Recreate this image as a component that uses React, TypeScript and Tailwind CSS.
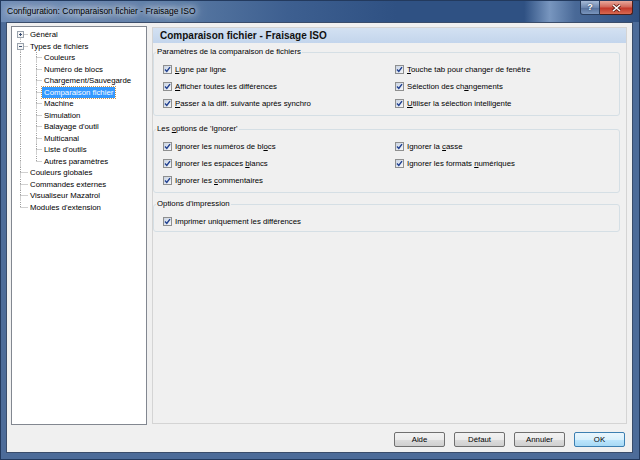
import React from "react";

type TreeItem = {
  label: string;
  level: 0 | 1;
  box?: "+" | "-";
  first?: boolean;
  last?: boolean;
  selected?: boolean;
};

const treeItems: TreeItem[] = [
  { label: "Général", level: 0, box: "+", first: true },
  { label: "Types de fichiers", level: 0, box: "-" },
  { label: "Couleurs", level: 1 },
  { label: "Numéro de blocs", level: 1 },
  { label: "Chargement/Sauvegarde", level: 1 },
  { label: "Comparaison fichier", level: 1, selected: true },
  { label: "Machine", level: 1 },
  { label: "Simulation", level: 1 },
  { label: "Balayage d'outil", level: 1 },
  { label: "Multicanal", level: 1 },
  { label: "Liste d'outils", level: 1 },
  { label: "Autres paramètres", level: 1, last: true },
  { label: "Couleurs globales", level: 0 },
  { label: "Commandes externes", level: 0 },
  { label: "Visualiseur Mazatrol", level: 0 },
  { label: "Modules d'extension", level: 0, last: true },
];

// label parts: [before, underlined letter, after]
type Opt = [string, string, string] | null;

const compareOpts: Opt[] = [
  ["", "L", "igne par ligne"],
  ["", "T", "ouche tab pour changer de fenêtre"],
  ["", "A", "fficher toutes les différences"],
  ["Sélection des ch", "a", "ngements"],
  ["", "P", "asser à la diff. suivante après synchro"],
  ["", "U", "tiliser la sélection intelligente"],
];

const ignoreOpts: Opt[] = [
  ["Ignorer les numéros de bl", "o", "cs"],
  ["Ignorer la ", "c", "asse"],
  ["Ignorer les espaces ", "b", "lancs"],
  ["Ignorer les formats ", "n", "umériques"],
  ["Ignorer les ", "c", "ommentaires"],
  null,
];

const printOpts: Opt[] = [["Imprimer uniquement les différences", "", ""]];

const LINE = "#a0a0a0";
const ROW_H = 11.5;

const Connector = ({
  width,
  top,
  bottom,
  branch,
  box,
}: {
  width: number;
  top?: boolean;
  bottom?: boolean;
  branch?: boolean;
  box?: "+" | "-";
}) => (
  <svg
    width={width}
    height={ROW_H}
    viewBox={`0 0 ${width} ${ROW_H}`}
    className="block shrink-0"
  >
    {top && (
      <line x1="8.5" y1="0" x2="8.5" y2="5.5" stroke={LINE} strokeDasharray="1 1" />
    )}
    {bottom && (
      <line x1="8.5" y1="5.5" x2="8.5" y2={ROW_H} stroke={LINE} strokeDasharray="1 1" />
    )}
    {branch && (
      <line x1="8.5" y1="5.5" x2={width} y2="5.5" stroke={LINE} strokeDasharray="1 1" />
    )}
    {box && (
      <g>
        <rect x="5.5" y="2.5" width="6" height="6" fill="#f6f6f6" stroke="#9aa3ad" />
        <line x1="7" y1="5.5" x2="10" y2="5.5" stroke="#3a4e72" />
        {box === "+" && <line x1="8.5" y1="4" x2="8.5" y2="7" stroke="#3a4e72" />}
      </g>
    )}
  </svg>
);

const TreeRow = ({ item }: { item: TreeItem }) => (
  <div className="flex items-center h-[11.5px]">
    {item.level === 0 ? (
      <Connector
        width={16}
        top={!item.first}
        bottom={!item.last}
        branch
        box={item.box}
      />
    ) : (
      <>
        <Connector width={16} top bottom />
        <Connector width={14} top bottom={!item.last} branch />
      </>
    )}
    <span
      className={`px-[2px] leading-[11px] whitespace-nowrap ${
        item.selected
          ? "bg-[#3399ff] text-white outline outline-1 outline-dotted outline-[#c9914a]"
          : "text-black"
      }`}
    >
      {item.label}
    </span>
  </div>
);

const CheckBox = () => (
  <span className="w-[9px] h-[9px] shrink-0 border border-[#8e8f8f] bg-[linear-gradient(135deg,#c9d3e2,#f6f7f9)] flex items-center justify-center">
    <svg width="7" height="7" viewBox="0 0 7 7" className="block">
      <path d="M1 3.6 L2.8 5.4 L6 1.2" fill="none" stroke="#1f3f8f" strokeWidth="1.4" />
    </svg>
  </span>
);

const Option = ({ opt }: { opt: Opt }) => {
  if (!opt) return <div />;
  return (
    <div className="flex items-center h-[17px] gap-[3px]">
      <CheckBox />
      <span className="whitespace-nowrap">
        {opt[0]}
        {opt[1] && <u className="underline-offset-1">{opt[1]}</u>}
        {opt[2]}
      </span>
    </div>
  );
};

const Group = ({
  legend,
  options,
  className,
  pb,
}: {
  legend: React.ReactNode;
  options: Opt[];
  className?: string;
  pb: string;
}) => (
  <fieldset
    className={`border border-[#d5dfe5] rounded-[3px] ${className ?? ""}`}
  >
    <legend className="ml-[2px] px-[1px] leading-[10px]">{legend}</legend>
    <div className={`grid grid-cols-[232px_1fr] pl-[9px] pt-[4px] ${pb}`}>
      {options.map((o, i) => (
        <Option key={i} opt={o} />
      ))}
    </div>
  </fieldset>
);

const DialogButton = ({
  label,
  primary,
}: {
  label: string;
  primary?: boolean;
}) => (
  <button
    className={`w-[51px] h-[15px] rounded-[2px] border text-[7.8px] leading-none text-black ${
      primary
        ? "border-[#3c7fb1] bg-[linear-gradient(#eaf6fd_0%,#d9f0fc_50%,#bee6fd_51%,#a7d9f5_100%)]"
        : "border-[#707070] bg-[linear-gradient(#f2f2f2_0%,#ebebeb_50%,#dddddd_51%,#cfcfcf_100%)]"
    }`}
  >
    {label}
  </button>
);

export default function App() {
  return (
    <div className="w-[640px] h-[460px] flex flex-col overflow-hidden bg-[#4d6c99] border border-[#233a5e] font-['Liberation_Sans',Arial,sans-serif]">
      {/* title bar */}
      <div className="h-[21px] shrink-0 flex items-start justify-between bg-[linear-gradient(90deg,#6f8db7_0%,#5d7da6_25%,#3d5f90_45%,#2f5183_62%,#2f5183_82%,#7896bf_86%,#46679698_90%,#2e4f80_100%)]">
        <span className="pl-[6px] pt-[5px] text-[8.5px] leading-[10px] text-black [text-shadow:0_0_6px_#fff,0_0_10px_#fff,0_0_16px_#ffffffcc]">
          Configuration: Comparaison fichier - Fraisage ISO
        </span>
        <div className="flex mr-[6px]">
          <div className="w-[20px] h-[14px] border border-[#2a3d5c] border-t-0 rounded-bl-[3px] bg-[linear-gradient(#a6bad6,#6e88b0_50%,#546f9a_51%,#7a95bd)] flex items-center justify-center text-[9px] font-bold leading-none text-white [text-shadow:0_0_2px_#1d2c44]">
            ?
          </div>
          <div className="w-[33px] h-[14px] border border-[#4a1f1a] border-t-0 border-l-0 rounded-br-[3px] bg-[linear-gradient(#e8a99c,#d2685a_45%,#c2382a_55%,#d86a52)] flex items-center justify-center">
            <svg width="9" height="8" viewBox="0 0 9 8" className="block">
              <path d="M1 1 L8 7 M8 1 L1 7" stroke="#5a1a12" strokeWidth="3" />
              <path d="M1 1 L8 7 M8 1 L1 7" stroke="#ffffff" strokeWidth="1.6" />
            </svg>
          </div>
        </div>
      </div>

      {/* client area */}
      <div className="flex-1 ml-[5px] mr-[6px] mb-[6px] border border-[#3a4d6b] bg-[#f0f0f0] flex flex-col text-[7.8px] text-black">
        <div className="flex gap-[5px] pl-[4px] pr-[5px] pt-[3px] h-[402px]">
          {/* tree */}
          <div className="w-[136px] shrink-0 bg-white border border-[#828790] pt-[2px]">
            {treeItems.map((item) => (
              <TreeRow key={item.label} item={item} />
            ))}
          </div>

          {/* page */}
          <div className="flex-1 my-[1px] border border-[#d4d4d4] pr-[6px]">
            <div className="h-[15px] -mr-[6px] bg-[linear-gradient(#d3e1f2,#c3d5ec)] flex items-center pl-[7px]">
              <span className="text-[10px] font-bold leading-none text-[#111]">
                Comparaison fichier - Fraisage ISO
              </span>
            </div>
            <Group
              className="mt-[4px]"
              pb="pb-[3px]"
              legend="Paramètres de la comparaison de fichiers"
              options={compareOpts}
            />
            <Group
              className="mt-[8px]"
              pb="pb-[3px]"
              legend={
                <>
                  Les <u>o</u>ptions de 'Ignorer'
                </>
              }
              options={ignoreOpts}
            />
            <Group
              className="mt-[6px]"
              pb="pb-[1px]"
              legend="Options d'impression"
              options={printOpts}
            />
          </div>
        </div>

        <div className="flex justify-end gap-[9px] pr-[7px] mt-[7px]">
          <DialogButton label="Aide" />
          <DialogButton label="Défaut" />
          <DialogButton label="Annuler" />
          <DialogButton label="OK" primary />
        </div>
      </div>
    </div>
  );
}
